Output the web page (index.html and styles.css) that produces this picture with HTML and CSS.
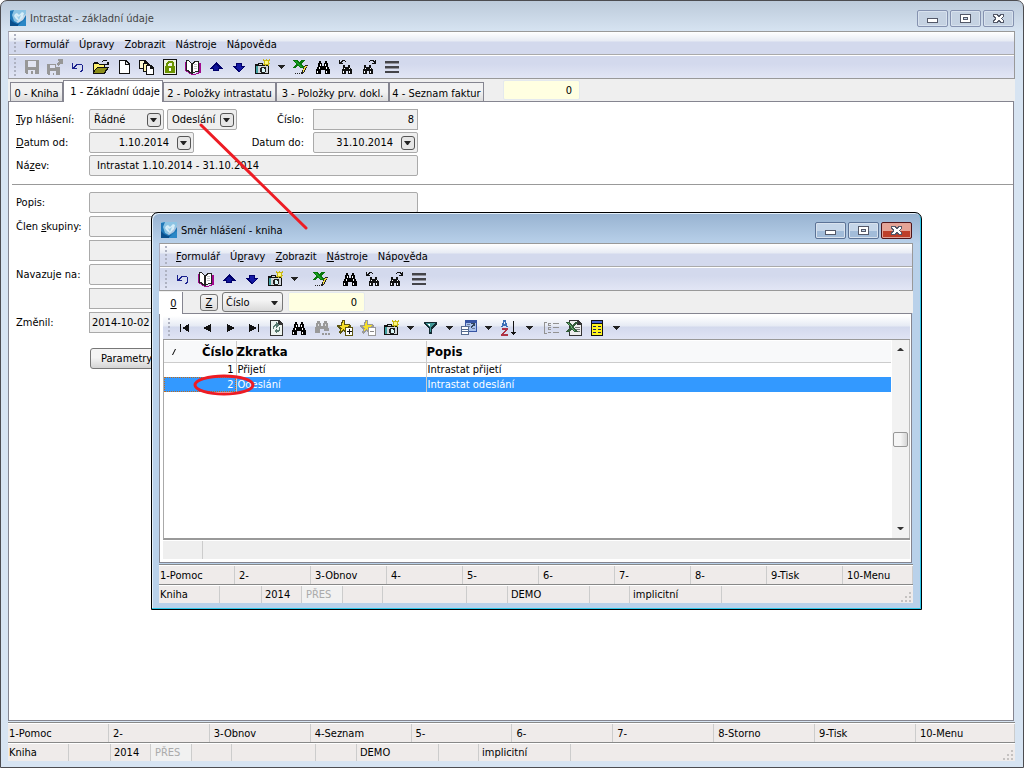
FILE: index.html
```html
<!DOCTYPE html>
<html lang="cs">
<head>
<meta charset="utf-8">
<title>Intrastat - základní údaje</title>
<link rel="stylesheet" href="styles.css">
</head>
<body>
<svg class="sprite" aria-hidden="true">
  <symbol id="app" viewBox="0 0 16 16"><path fill="#8cc4e4" d="M0 0h16v4L5 13l-5-2z"/><path fill="#1f78b8" d="M0 1l4-1-2 5 2 6 4 2 5-3 3-5v11H0z"/><path fill="#0a4f8c" d="M0 9l3 3 4 2 5-1 4-3v6H0z"/><path fill="#2b87c6" d="M8 15l8-6v7H8z"/><path fill="#d6edf8" d="M5 4l2-1 2 2 3-3 2 1-1 4-4 4-3-2-2-3z"/><path fill="#9bcce8" d="M6 5l2 2 3-2-2 5z"/></symbol>
  <symbol id="save" viewBox="0 0 16 16"><path fill="#979797" d="M1 1h14v14H2L1 14z"/><path fill="#e2e5f2" d="M4 2h8v6H4zM4 11h7v4H9v-3H7v3H4z"/></symbol>
  <symbol id="saveas" viewBox="0 0 16 16"><path fill="#979797" d="M0 5h9v3h4v8H1l-1-1zM11 0h5v5h-2V4l-3 3-2-2 3-3h-1z"/><path fill="#dfe3f2" d="M3 6h5v3H3zM3 12h6v4H7v-2H6v2H3z"/></symbol>
  <symbol id="undo" viewBox="0 0 16 16"><path fill="#19208e" d="M2 4h1v4l2-2 2-1h4l2 2v4l-1 1v1h-2v-1l2-2V7l-1-1H8L6 7 5 9h2v1H2z"/></symbol>
  <symbol id="open" viewBox="0 0 16 16"><path fill="#111" d="M0 4h1V3h4l1 2h6v3h4l-4 7H0zM9 2h1V1h4v2h2v3h-4V5h2V2h-4v1H9z"/><path fill="#fff16b" d="M1 5h4l1 1h5v2H4l-3 4z"/><path fill="#8b8d19" d="M4 9h10l-3 5H1z"/></symbol>
  <symbol id="page" viewBox="0 0 16 16"><path fill="#111" d="M3 1h7l4 4v10H3z"/><path fill="#fff" d="M4 2h5v4h4v8H4z"/><path fill="#ddd" d="M10 3l2 2h-2z"/></symbol>
  <symbol id="pages" viewBox="0 0 16 16"><path fill="#111" d="M0 1h6l3 3v6H0z"/><path fill="#fffbd6" d="M1 2h4v3h3v4H1z"/><path fill="#111" d="M4 4h5l3 3v6H4z"/><path fill="#fff5ae" d="M5 5h3v3h3v4H5z"/><path fill="#111" d="M7 6h5l3 3v7H7z"/><path fill="#fff" d="M8 7h3v3h3v5H8z"/></symbol>
  <symbol id="lock" viewBox="0 0 16 16"><path fill="#111" d="M1 0h14v16H1z"/><path fill="#eef3de" d="M2 1h12v14H2z"/><path fill="#6b9300" d="M3 7h10v7H3zM4 7V4l2-2h4l2 2v3h-2V5L9 4H7L6 5v2z"/><path fill="#fff" d="M7 9h2v3H7z"/></symbol>
  <symbol id="book" viewBox="0 0 16 16"><path fill="#a1098e" d="M0 3h2v9l6 3 5-1V4h3v10l-7 2H7l-7-4z"/><path fill="#222" d="M1 1h2l4 3v11l-5-3H1zM7 4l3-2h4v11h-3l-4 2z"/><path fill="#fff" d="M2 2h1l3 3v8l-3-2H2zM8 5l2-2h3v9h-2l-3 1z"/><path fill="#c1c4c8" d="M9 5h3v1H9zM9 7h3v1H9zM9 9h3v1H9z"/></symbol>
  <symbol id="up" viewBox="0 0 16 16"><path fill="#00006b" d="M8 3l7 7h-4v2H5v-2H1z"/><path fill="#0f1498" d="M8 5l3 4h-1v2H6V9H4z"/></symbol>
  <symbol id="down" viewBox="0 0 16 16"><path fill="#00006b" d="M5 4h6v3h4l-7 6-7-6h4z"/><path fill="#1419a5" d="M6 5h4v3h2l-4 4-4-4h2z"/></symbol>
  <symbol id="camera" viewBox="0 0 16 16"><path fill="#111" d="M1 5h3V4h5v1h6v10H1z"/><path fill="#3f9fa1" d="M2 7h2v7H2z"/><path fill="#d2d7db" d="M5 5h3v1H5zM4 7h10v7H4z"/><path fill="#222" d="M7 8h4l1 1v3l-1 2H8l-2-1V9z"/><path fill="#d9f6f8" d="M8 9h2v1h1v2l-1 1H8z"/><path fill="#c9b916" d="M9 0h1v1h2V0h1v1h2V0h1v2h-1v2h1v1h-1v2h-1V6h-2v1h-1V6H9V5h1V2H9z"/><path fill="#fff77b" d="M11 2h3v3h-3z"/></symbol>
  <symbol id="excel" viewBox="0 0 16 16"><path fill="#08770b" d="M1 1h4l2 2 2-2h4L9 5l4 4H9L6 7 3 9H0l4-4z"/><path fill="#16a122" d="M2 2h2l6 6H8z"/><path fill="#222" d="M13 6h3l-4 8-3 1 1-3zM3 14h1v1H3zM5 14h1v1H5zM7 14h1v1H7z"/><path fill="#f5dc42" d="M13 7h2l-3 5-1 1v-2z"/></symbol>
  <symbol id="binoc" viewBox="0 0 16 16"><path fill="currentColor" d="M4 2h2v2h1v3h2V4h1V2h2v2h1v3l2 4v4h-5v-4H6v4H1v-4l2-4V4h1z"/><path fill="#fff" d="M5 5h1v2H5zM4 8h1v2H4zM2 12h1v2H2zM10 5h1v2h-1zM11 8h1v2h-1zM11 12h1v2h-1z"/></symbol>
  <symbol id="binocdots" viewBox="0 0 16 16"><path fill="#999" d="M3 1h3v2h1v3h2V3h1V1h3v2h1v3l1 3v2h-5V9H6v4H1V9l1-3V3h1zM8 13h2v2H8zM11 13h2v2h-2zM14 13h2v2h-2z"/><path fill="#ddd" d="M4 4h1v2H4zM11 4h1v2h-1z"/></symbol>
  <symbol id="prev" viewBox="0 0 16 16"><path fill="#111" d="M1 1h1v2l2-2h3v1h1v1H7V2H5L3 4h2v1H1zM5 6h2v2h3V6h2v2l2 3v4h-4v-3H8v3H4v-4l1-2z"/><path fill="#fff" d="M6 9h1v1H6zM5 12h1v2H5zM11 9h1v1h-1zM11 12h1v2h-1z"/></symbol>
  <symbol id="next" viewBox="0 0 16 16"><path fill="#111" d="M15 1h-1v2l-2-2H9v1H8v1h1V2h2l2 2h-2v1h4zM3 6h2v2h3V6h2v2l2 3v4H8v-3H6v3H2v-4l1-2z"/><path fill="#fff" d="M4 9h1v1H4zM3 12h1v2H3zM9 9h1v1H9zM9 12h1v2H9z"/></symbol>
  <symbol id="lines" viewBox="0 0 16 16"><path fill="#444449" d="M1 2h14v2H1zM1 7h14v2H1zM1 12h14v2H1z"/><path fill="#92939c" d="M1 4h14v1H1zM1 9h14v1H1z"/></symbol>
  <symbol id="caret" viewBox="0 0 8 8"><path fill="#222" d="M0 2h7L4 6H3z"/></symbol>
  <symbol id="first" viewBox="0 0 16 16"><path fill="#111" d="M4 4h1v8H4zM13 4v8L6 8z"/></symbol>
  <symbol id="left" viewBox="0 0 16 16"><path fill="#111" d="M12 4v8L4 8z"/></symbol>
  <symbol id="right" viewBox="0 0 16 16"><path fill="#111" d="M5 4v8l8-4z"/></symbol>
  <symbol id="last" viewBox="0 0 16 16"><path fill="#111" d="M13 4h1v8h-1zM4 4v8l8-4z"/></symbol>
  <symbol id="refresh" viewBox="0 0 16 16"><path fill="#333" d="M2 0h9l4 4v12H2z"/><path fill="#eef4f0" d="M3 1h7v4h4v10H3z"/><path fill="#597b70" d="M5 6l2-2h1V2l3 3-3 3V6H7L6 7v2H5zM12 7v3l-2 2H9v2l-3-3 3-3v2h1l1-1V7z"/></symbol>
  <symbol id="star" viewBox="0 0 16 16"><path fill="currentColor" d="M5 0h3v4h5l1 2-3 3v5H9L6 11l-3 3-1-1 1-4-3-2V5h4z"/><path class="star-fill" d="M6 1h1v4h5l-3 3v4L6 9l-2 2 1-3-3-2h3z"/><path fill="currentColor" d="M8 7h8v9H8z"/><path fill="#fff" d="M9 8h6v7H9z"/></symbol>
  <symbol id="funnel" viewBox="0 0 16 16"><path fill="#142b32" d="M2 2h13v2l-5 5v5H7V9L2 4z"/><path fill="#3f9797" d="M4 3h9l-4 5v4H8V8z"/><path fill="#fff" d="M5 4h3v2H7z"/></symbol>
  <symbol id="form" viewBox="0 0 16 16"><path fill="#3654a3" d="M4 0h12v12H4z"/><path fill="#a9c1ec" d="M5 3h10v8H5z"/><path fill="#6d7d9b" d="M6 4h3v1H6zM6 6h3v1H6zM11 8h3v1h-3z"/><path fill="#566b8f" d="M0 6h8v9H0z"/><path fill="#fff" d="M1 7h6v2H1zM1 10h6v1H1zM1 12h6v2H1z"/><path fill="#33465c" d="M10 3h4v3h-1V5l-3 3-1-1 3-3h-2z"/></symbol>
  <symbol id="sort" viewBox="0 0 16 16"><path fill="none" stroke="#3b6eb5" stroke-width="1.500" d="M2 7l2-6h1l2 6M3 5h3"/><path fill="none" stroke="#ae3345" stroke-width="1.500" d="M2 9h5l-5 6h6"/><path fill="#111" d="M13 1h1v11h2l-2 3h-1l-2-3h2z"/></symbol>
  <symbol id="list" viewBox="0 0 16 16"><path fill="#929292" d="M1 2h3v1H2v10h2v1H1zM5 3h3v1H6v1h2v1H5zM10 3h6v1h-6zM5 7h3v1H6v1h2v1H5zM10 7h6v1h-6zM5 12h3v1H5zM10 12h6v1h-6z"/></symbol>
  <symbol id="xls" viewBox="0 0 16 16"><path fill="#333" d="M3 0h9l4 4v12H3z"/><path fill="#eee" d="M4 1h7v4h4v10H4z"/><path fill="#777" d="M9 7h5v1H9zM9 9h5v1H9zM9 11h5v1H9z"/><path fill="#335b39" d="M0 2h4l2 3 3-3h3L8 7l4 5H8L6 9l-3 3H0l4-5z"/><path fill="#65b36b" d="M2 3h1l6 8H8z"/></symbol>
  <symbol id="table" viewBox="0 0 16 16"><path fill="#111" d="M2 0h12v16H2z"/><path fill="#fff41f" d="M3 4h10v11H3z"/><path fill="#4c66d1" d="M3 1h10v2H3z"/><path fill="#22245b" d="M4 6h3v1H4zM9 6h3v1H9zM4 9h3v1H4zM9 9h3v1H9zM4 12h3v1H4zM9 12h3v1H9z"/></symbol>
  <symbol id="min" viewBox="0 0 11 11"><path fill="#535868" d="M0 5h11v5H0z"/><path fill="#fff" d="M1 6h9v3H1z"/></symbol>
  <symbol id="max" viewBox="0 0 11 11"><path fill="#535868" d="M0 1h11v9H0z"/><path fill="#fff" d="M1 2h9v7H1z"/><path fill="#535868" d="M3 4h5v3H3z"/><path fill="#c5d5e7" d="M4 5h3v1H4z"/></symbol>
  <symbol id="close" viewBox="0 0 11 11"><path fill="#535868" d="M0 1h4l1 1h1l1-1h4v3L9 5v1l2 1v3H7L6 9H5l-1 1H0V7l2-1V5L0 4z"/><path fill="#fff" d="M1 2h2l2 2h1l2-2h2v1L8 5v1l2 2v1H8L6 7H5L3 9H1V8l2-2V5L1 3z"/></symbol>
</svg>

<main class="window">
  <header class="titlebar">
    <svg class="icon"><use href="#app"/></svg>
    <h1 class="title">Intrastat - základní údaje</h1>
    <div class="controls">
      <button class="ctl" aria-label="Minimalizovat"><svg><use href="#min"/></svg></button>
      <button class="ctl" aria-label="Maximalizovat"><svg><use href="#max"/></svg></button>
      <button class="ctl" aria-label="Zavřít"><svg><use href="#close"/></svg></button>
    </div>
  </header>
  <div class="bars">
    <nav class="menubar"><button>Formulář</button><button>Úpravy</button><button>Zobrazit</button><button>Nástroje</button><button>Nápověda</button></nav>
    <div class="toolbar">
      <button aria-label="Uložit"><svg><use href="#save"/></svg></button>
      <button aria-label="Uložit a zavřít"><svg><use href="#saveas"/></svg></button>
      <button aria-label="Zpět"><svg><use href="#undo"/></svg></button>
      <button aria-label="Otevřít"><svg><use href="#open"/></svg></button>
      <button aria-label="Nový"><svg><use href="#page"/></svg></button>
      <button aria-label="Kopie"><svg><use href="#pages"/></svg></button>
      <button aria-label="Zámek"><svg><use href="#lock"/></svg></button>
      <button aria-label="Kniha"><svg><use href="#book"/></svg></button>
      <button aria-label="Nahoru"><svg><use href="#up"/></svg></button>
      <button aria-label="Dolů"><svg><use href="#down"/></svg></button>
      <button aria-label="Snímek"><svg><use href="#camera"/></svg></button>
      <button class="drop" aria-label="Možnosti snímku"><svg><use href="#caret"/></svg></button>
      <button aria-label="Excel"><svg><use href="#excel"/></svg></button>
      <button aria-label="Hledat"><svg><use href="#binoc"/></svg></button>
      <button aria-label="Hledat předchozí"><svg><use href="#prev"/></svg></button>
      <button aria-label="Hledat další"><svg><use href="#next"/></svg></button>
      <button aria-label="Seznam"><svg><use href="#lines"/></svg></button>
    </div>
  </div>
  <div class="tabs">
    <button class="tab tab-first">0 - Kniha</button><button class="tab active">1 - Základní údaje</button><button class="tab tab-wide">2 - Položky intrastatu</button><button class="tab tab-wide">3 - Položky prv. dokl.</button><button class="tab tab-last">4 - Seznam faktur</button>
    <input class="counter" value="0" aria-label="Počet">
  </div>
  <section class="panel">
    <form class="form">
      <div class="row">
        <label class="lbl" for="typ"><u>T</u>yp hlášení:</label>
        <span class="combo"><select id="typ"><option>Řádné</option></select><button type="button" class="arrow" aria-label="Rozbalit typ"><svg><use href="#caret"/></svg></button></span>
        <span class="combo narrow"><select aria-label="Směr"><option>Odeslání</option></select><button type="button" class="arrow" aria-label="Rozbalit směr"><svg><use href="#caret"/></svg></button></span>
        <label class="lbl side" for="cislo">Číslo:</label>
        <span class="combo date square"><input id="cislo" value="8"></span>
      </div>
      <div class="row">
        <label class="lbl" for="od"><u>D</u>atum od:</label>
        <span class="combo date"><input id="od" value="1.10.2014"><button type="button" class="arrow" aria-label="Kalendář od"><svg><use href="#caret"/></svg></button></span>
        <label class="lbl side" for="do">Datum do:</label>
        <span class="combo date"><input id="do" value="31.10.2014"><button type="button" class="arrow" aria-label="Kalendář do"><svg><use href="#caret"/></svg></button></span>
      </div>
      <div class="row">
        <label class="lbl" for="nazev">Ná<u>z</u>ev:</label>
        <span class="combo full"><input id="nazev" value="Intrastat 1.10.2014 - 31.10.2014"></span>
      </div>
    </form>
    <hr class="rule">
    <form class="form lower">
      <div class="row"><label class="lbl" for="popis">Popis:</label><span class="combo full"><input id="popis"></span></div>
      <div class="row"><label class="lbl" for="clen">Člen <u>s</u>kupiny:</label><span class="combo full"><input id="clen"></span></div>
      <div class="row"><span class="lbl"></span><span class="combo full square"><input aria-label="Název skupiny"></span></div>
      <div class="row"><label class="lbl" for="nav">Navazuje na:</label><span class="combo full"><input id="nav"></span></div>
      <div class="row"><span class="lbl"></span><span class="combo full square"><input aria-label="Název navazujícího"></span></div>
      <div class="row"><label class="lbl" for="zmenil">Změnil:</label><span class="combo full square tight"><input id="zmenil" value="2014-10-02"></span></div>
      <div class="row actions"><span class="lbl"></span><button type="button" class="push">Parametry</button></div>
    </form>
  </section>
  <footer class="foot">
    <div class="fkeys"><span>1-Pomoc</span><span>2-</span><span>3-Obnov</span><span>4-Seznam</span><span>5-</span><span>6-</span><span>7-</span><span>8-Storno</span><span>9-Tisk</span><span>10-Menu</span></div>
    <div class="status"><span>Kniha</span><span></span><span>2014</span><span class="off">PŘES</span><span></span><span></span><span></span><span>DEMO</span><span></span><span>implicitní</span><span></span><svg class="grip"><path d="M8 0h2v2H8zM8 4h2v2H8zM4 4h2v2H4zM8 8h2v2H8zM4 8h2v2H4zM0 8h2v2H0z"/></svg></div>
  </footer>
</main>

<section class="window dialog" role="dialog" aria-labelledby="dlg-title">
  <header class="titlebar">
    <svg class="icon"><use href="#app"/></svg>
    <h2 class="title" id="dlg-title">Směr hlášení - kniha</h2>
    <div class="controls">
      <button class="ctl" aria-label="Minimalizovat"><svg><use href="#min"/></svg></button>
      <button class="ctl" aria-label="Maximalizovat"><svg><use href="#max"/></svg></button>
      <button class="ctl red" aria-label="Zavřít"><svg><use href="#close"/></svg></button>
    </div>
  </header>
  <div class="bars">
    <nav class="menubar"><button><u>F</u>ormulář</button><button>Ú<u>p</u>ravy</button><button><u>Z</u>obrazit</button><button><u>N</u>ástroje</button><button>Nápo<u>v</u>ěda</button></nav>
    <div class="toolbar">
      <button aria-label="Zpět"><svg><use href="#undo"/></svg></button>
      <button aria-label="Kniha"><svg><use href="#book"/></svg></button>
      <button aria-label="Nahoru"><svg><use href="#up"/></svg></button>
      <button aria-label="Dolů"><svg><use href="#down"/></svg></button>
      <button aria-label="Snímek"><svg><use href="#camera"/></svg></button>
      <button class="drop" aria-label="Možnosti snímku"><svg><use href="#caret"/></svg></button>
      <button class="spaced" aria-label="Excel"><svg><use href="#excel"/></svg></button>
      <button class="spaced" aria-label="Hledat"><svg><use href="#binoc"/></svg></button>
      <button aria-label="Hledat předchozí"><svg><use href="#prev"/></svg></button>
      <button aria-label="Hledat další"><svg><use href="#next"/></svg></button>
      <button aria-label="Seznam"><svg><use href="#lines"/></svg></button>
    </div>
  </div>
  <div class="tabs">
    <button class="tab active"><u>0</u></button>
    <button class="zbtn"><u>Z</u></button>
    <span class="sortsel"><select aria-label="Řazení"><option>Číslo</option></select><svg><use href="#caret"/></svg></span>
    <input class="counter" value="0" aria-label="Hledané číslo">
  </div>
  <section class="panel grid">
    <div class="toolbar gridbar">
      <button aria-label="První"><svg><use href="#first"/></svg></button>
      <button aria-label="Předchozí"><svg><use href="#left"/></svg></button>
      <button aria-label="Další"><svg><use href="#right"/></svg></button>
      <button aria-label="Poslední"><svg><use href="#last"/></svg></button>
      <button aria-label="Obnovit"><svg><use href="#refresh"/></svg></button>
      <button aria-label="Hledat"><svg><use href="#binoc"/></svg></button>
      <button aria-label="Hledat dál"><svg><use href="#binocdots"/></svg></button>
      <button class="gold" aria-label="Přidat"><svg><use href="#star"/><path fill="#111" d="M10 11h5v1h-5zM12 9h1v5h-1z"/></svg></button>
      <button class="dim" aria-label="Odebrat"><svg><use href="#star"/><path fill="#888" d="M10 11h4v1h-4z"/></svg></button>
      <button aria-label="Snímek"><svg><use href="#camera"/></svg></button>
      <button class="drop" aria-label="Možnosti snímku"><svg><use href="#caret"/></svg></button>
      <button aria-label="Filtr"><svg><use href="#funnel"/></svg></button>
      <button class="drop" aria-label="Možnosti filtru"><svg><use href="#caret"/></svg></button>
      <button aria-label="Formulář"><svg><use href="#form"/></svg></button>
      <button class="drop" aria-label="Možnosti formuláře"><svg><use href="#caret"/></svg></button>
      <button aria-label="Řadit"><svg><use href="#sort"/></svg></button>
      <button class="drop far" aria-label="Možnosti řazení"><svg><use href="#caret"/></svg></button>
      <button aria-label="Skupiny"><svg><use href="#list"/></svg></button>
      <button aria-label="Export"><svg><use href="#xls"/></svg></button>
      <button aria-label="Sloupce"><svg><use href="#table"/></svg></button>
      <button class="drop" aria-label="Možnosti sloupců"><svg><use href="#caret"/></svg></button>
    </div>
    <div class="listing">
      <div class="scroller">
        <table>
          <colgroup><col class="c1"><col class="c2"><col></colgroup>
          <thead><tr><th class="num"><span class="numhead"><svg class="mark"><path d="M1 6l3-6h1L2 6z"/></svg>Číslo</span></th><th>Zkratka</th><th>Popis</th></tr></thead>
          <tbody>
            <tr><td class="num">1</td><td>Přijetí</td><td>Intrastat přijetí</td></tr>
            <tr class="sel"><td class="num">2</td><td>Odeslání</td><td>Intrastat odeslání</td></tr>
          </tbody>
        </table>
      </div>
      <div class="scrollbar"><svg class="sb-arrow"><path d="M0 5h7L4 2H3z"/></svg><i class="thumb"></i><svg class="sb-arrow"><path d="M0 2h7L4 5H3z"/></svg></div>
    </div>
    <div class="strip"><span></span></div>
  </section>
  <footer class="foot">
    <div class="fkeys"><span>1-Pomoc</span><span>2-</span><span>3-Obnov</span><span>4-</span><span>5-</span><span>6-</span><span>7-</span><span>8-</span><span>9-Tisk</span><span>10-Menu</span></div>
    <div class="status"><span>Kniha</span><span></span><span>2014</span><span class="off">PŘES</span><span></span><span></span><span></span><span>DEMO</span><span></span><span>implicitní</span><span></span><svg class="grip"><path d="M8 0h2v2H8zM8 4h2v2H8zM4 4h2v2H4zM8 8h2v2H8zM4 8h2v2H4zM0 8h2v2H0z"/></svg></div>
  </footer>
</section>
<svg class="marks" aria-hidden="true"><path d="M201 125L306 228"/><ellipse cx="224" cy="385" rx="29" ry="9"/></svg>
</body>
</html>
```
FILE: styles.css
```css
* { box-sizing: border-box; }
body { margin: 0; min-height: 100vh; display: flex; background: #fff; color: #000; font: 11px/14px "DejaVu Sans Condensed", "DejaVu Sans", sans-serif; }
button, input, select { font: inherit; color: inherit; margin: 0; padding: 0; border: 0; background: none; border-radius: 0; }
select { appearance: none; }
svg { display: block; }
.sprite { position: absolute; width: 0; height: 0; }

.window { flex: 1; display: flex; flex-direction: column; min-width: 0; padding: 0 8px 6px 7px; border: 1px solid #4c4c50; border-radius: 7px 7px 0 0; background: linear-gradient(#bccada, #d7e4f2 31px, #d7e4f2); }
.titlebar { display: flex; align-items: center; height: 30px; padding: 4px 1px 0 2px; flex: none; }
.icon { width: 16px; height: 16px; margin-right: 4px; }
.title { flex: 1; margin: 0; padding-top: 2px; font-size: 11px; font-weight: normal; color: #444; }
.controls { display: flex; gap: 2px; }
.ctl { width: 31px; height: 17px; display: grid; place-items: center; border: 1px solid #8592b0; border-radius: 2px; background: #c5d2e2; box-shadow: inset 0 0 0 1px #d8e2ee; }
.ctl svg { width: 11px; height: 11px; shape-rendering: crispEdges; }

.bars { border: 1px solid #999; border-left-color: #aab; flex: none; }
.menubar { display: flex; align-items: center; gap: 10px; height: 23px; padding: 3px 0 0 16px; border-bottom: 1px solid #aaa; background: linear-gradient(#fff, #e7ebf4 9px, #d3d9ed 10px); }
.toolbar { display: flex; align-items: center; height: 23px; padding-left: 12px; border-top: 1px solid #fff; background: linear-gradient(#d3d9ed 8px, #e2e6f5); }
.menubar, .toolbar { position: relative; }
.menubar::before, .toolbar::before { content: ""; position: absolute; left: 5px; top: 2px; bottom: 2px; width: 2px; background: repeating-linear-gradient(#aeb2c1 0 2px, transparent 2px 4px); }
.toolbar button { width: 23px; padding-left: 3px; flex: none; display: grid; align-items: center; justify-items: start; }
.toolbar svg { width: 16px; height: 16px; shape-rendering: crispEdges; }
.toolbar .drop { width: 15px; padding-left: 4px; }
.arrow svg { width: 8px; height: 8px; }
.toolbar .drop svg { width: 8px; height: 8px; }
.toolbar .spaced { margin-left: 7px; }
.dim { color: #999; }
.dim .star-fill, .dim use { fill: #999; }
.gold { color: #5c5510; }
.star-fill { fill: #f6df28; }

.tabs { display: flex; align-items: flex-end; height: 22px; padding-left: 2px; background: #efefef; flex: none; }
.tab { height: 19px; padding-top: 3px; white-space: nowrap; border: 1px solid #858590; border-bottom: 0; background: linear-gradient(#f2f2f2 50%, #dcdcdc); }
.tab-first { width: 53px; }
.tab-wide { width: 113px; }
.tab-last { width: 95px; }
.tab.active { width: 100px; height: 22px; padding: 2px 0 2px 4px; background: #fff; position: relative; margin-bottom: -1px; z-index: 1; }
.counter { width: 77px; height: 20px; margin: 0 0 1px 19px; padding-right: 7px; text-align: right; background: #ffffe1; border: 1px solid #e4e9ee; border-radius: 2px; min-width: 0; }

.panel { flex: 1; min-height: 0; margin-right: 1px; background: #fff; border: 1px solid #858590; padding: 7px 0 0 7px; overflow: hidden; }
.form { display: grid; gap: 2px; }
.row { display: flex; align-items: center; width: 402px; }
.lbl { width: 73px; flex: none; white-space: nowrap; }
.lbl.side { width: auto; margin-left: auto; padding-right: 9px; }
.combo { display: flex; align-items: center; width: 75px; height: 21px; padding: 0 2px 0 4px; border: 1px solid #aaa; border-radius: 2px; background: #efefef; }
.combo select, .combo input { flex: 1; width: 0; min-width: 0; height: 16px; outline: 0; }
.narrow { width: 70px; margin-left: 3px; }
.date { width: 105px; }
.date input { text-align: right; padding-right: 8px; }
.date input:only-child { padding-right: 1px; }
.arrow { width: 14px; height: 14px; display: grid; place-items: center; border: 1px solid #555; border-radius: 3px; background: #e6e6e6; flex: none; }
.full { width: 329px; padding-left: 7px; }
.square { border-radius: 0; }
.tight { padding-left: 2px; }
.rule { height: 1px; margin: 8px 0 7px -4px; border: 0; background: #999; }
.lower { gap: 3px; }
.actions { margin-top: 12px; }
.push { width: 86px; height: 21px; margin-left: 1px; padding-left: 10px; text-align: left; border: 1px solid #777; border-radius: 3px; background: linear-gradient(#f4f4f4 45%, #d4d4d4); }

.foot { background: #efebea; margin-top: 1px; border-top: 1px solid #888; flex: none; }
.fkeys { display: grid; grid-template-columns: repeat(9, 1fr) 99px; height: 20px; border-top: 1px solid #fff; border-bottom: 1px solid #888; }
.fkeys span { padding: 3px 0 0 1px; border-right: 1px solid #ccc; }
.fkeys span + span { padding-left: 4px; }
.status { display: grid; grid-template-columns: 61px 42px 40px 41px 40px 84px 41px 82px 40px 92px 1fr 12px; height: 18px; border-top: 1px solid #fff; }
.status span { padding: 2px 0 0 3px; border-right: 1px solid #ccc; }
.status span:first-child { padding-left: 1px; }
.status span:nth-last-child(2) { border: 0; }
.status .off { padding-left: 4px; color: #aaa; background: #f1f1f1; }
.grip { width: 10px; height: 10px; fill: #c5c2c1; align-self: end; margin-bottom: 1px; }

.dialog { position: absolute; left: 151px; top: 212px; width: 771px; height: 398px; border-color: #000; background: linear-gradient(#97b2d0, #b9d1ea 31px, #b9d1ea); box-shadow: inset -1px -1px #2bc6e8, inset 1px 1px #e4f0fa; }
.dialog .title { color: #000; }
.dialog .ctl { background: linear-gradient(#c5d6e9 50%, #a2bcd9 50%); border-color: #5c7396; }
.dialog .red { background: linear-gradient(#e5a496 50%, #bd3f2a 50%); border-color: #4f1519; box-shadow: inset 0 0 0 1px #e0a398; }
.dialog .tabs { padding-left: 0; }
.dialog .tab.active { width: 24px; height: 22px; padding: 2px 0 0 6px; border-left: 0; border-top: 0; }
.zbtn { width: 18px; height: 17px; margin: 0 4px 2px 17px; border: 1px solid #777; border-radius: 3px; background: linear-gradient(#f4f4f4, #ddd); }
.sortsel { display: flex; align-items: center; width: 61px; height: 20px; margin-bottom: 1px; padding: 1px 3px 0; border: 1px solid #777; border-radius: 3px; background: linear-gradient(#f4f4f4 40%, #d9d9d9); }
.sortsel select { flex: 1; min-width: 0; }
.sortsel svg { width: 8px; height: 8px; }
.dialog .counter { margin-left: 5px; }
.dialog .fkeys { grid-template-columns: repeat(9, 1fr) 70px; }
.grid { display: flex; flex-direction: column; padding: 1px 1px 3px 3px; }
.gridbar { height: 25px; padding-left: 10px; border-bottom: 1px solid #999; background: linear-gradient(#fff, #e6eaf4 10px, #d3d9ed 11px, #e0e4f4); flex: none; }
.gridbar .drop { width: 16px; }
.gridbar .far { width: 20px; padding-left: 6px; }
.listing { flex: 1; display: flex; min-height: 0; border-left: 1px solid #aaa; border-bottom: 2px solid #999; }
.scroller { flex: 1; min-width: 0; padding-top: 1px; }
table { width: 100%; table-layout: fixed; border-collapse: collapse; }
.c1 { width: 72px; }
.c2 { width: 190px; }
th { height: 21px; padding: 1px 0 0; text-align: left; font-size: 13px; font-weight: bold; background: #f8f9fa; border-bottom: 1px solid #ccc; }
td { height: 15px; padding: 0 1px; line-height: 14px; }
th + th, td + td { border-left: 1px solid #ccc; }
.num { text-align: right; padding-right: 2px; }
.numhead { display: flex; align-items: center; justify-content: space-between; }
.mark { width: 6px; height: 6px; margin-left: 7px; }
.sel { background: #3399ff; color: #fff; }
.sel .num { outline: 1px dotted #c06a1c; outline-offset: -1px; }
.scrollbar { width: 19px; display: flex; flex-direction: column; align-items: center; justify-content: space-between; padding: 6px 0; background: #f2f2f2; border-right: 1px solid #bbb; border-left: 1px solid #fff; }
.sb-arrow { width: 7px; height: 7px; fill: #333; }
.thumb { width: 15px; height: 15px; border: 1px solid #979797; border-radius: 2px; background: linear-gradient(90deg, #f5f5f5 50%, #d5d5d5); }
.strip { height: 18px; margin-top: 1px; background: #efefef; display: flex; flex: none; }
.strip span { width: 40px; border-right: 1px solid #ccc; }
.marks { position: absolute; left: 0; top: 0; width: 400px; height: 400px; pointer-events: none; fill: none; stroke: #ed1c24; stroke-width: 3px; stroke-linecap: round; }
```
